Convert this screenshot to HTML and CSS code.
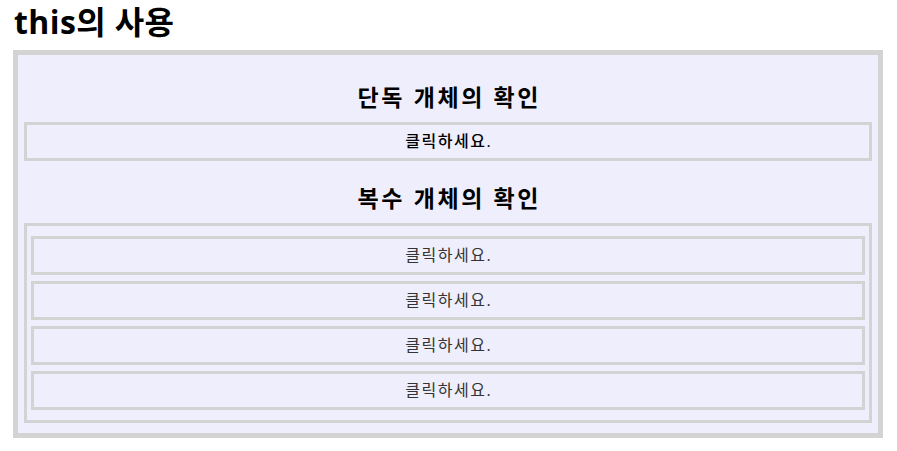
FILE: index.html
```html
<!DOCTYPE html>
<html lang="ko">
<head>
<meta charset="utf-8">
<title>this의 사용</title>
<link rel="stylesheet" href="styles.css">
</head>
<body>
<h1 class="title">this의 사용</h1>
<div class="panel">
  <h2 class="section-title">단독 개체의 확인</h2>
  <div class="single">클릭하세요.</div>
  <h2 class="section-title">복수 개체의 확인</h2>
  <div class="list">
    <div class="item">클릭하세요.</div>
    <div class="item">클릭하세요.</div>
    <div class="item">클릭하세요.</div>
    <div class="item">클릭하세요.</div>
  </div>
</div>
</body>
</html>
```

FILE: styles.css
```css
html, body {
  background: #ffffff;
}
body {
  margin: 0 14px 0 13px;
  font-family: "Open Sans", "Noto Sans CJK KR", sans-serif;
  color: #000;
}
.title {
  margin: 0 0 6px 1px;
  font-size: 32px;
  line-height: 44px;
  font-weight: bold;
  letter-spacing: 0.4px;
}
.panel {
  border: 5px solid #d3d3d3;
  background: #eeeefc;
  padding: 5px 6px 10px;
}
.section-title {
  margin: 22px 0 10px;
  font-size: 23px;
  line-height: 30px;
  font-weight: bold;
  text-align: center;
  letter-spacing: 2.6px;
  text-indent: 2.6px;
}
.single {
  border: 3px solid #d3d3d3;
  padding: 7px 0;
  font-size: 16px;
  line-height: 19px;
  text-align: center;
  color: #000;
  font-weight: 500;
  letter-spacing: 1.5px;
  text-indent: 1.5px;
}
.list {
  border: 3px solid #d3d3d3;
  padding: 10px 4px;
  display: flex;
  flex-direction: column;
  gap: 6px;
}
.item {
  border: 3px solid #d3d3d3;
  padding: 7px 0;
  font-size: 16px;
  line-height: 19px;
  text-align: center;
  color: #333;
  letter-spacing: 1.5px;
  text-indent: 1.5px;
}
```
